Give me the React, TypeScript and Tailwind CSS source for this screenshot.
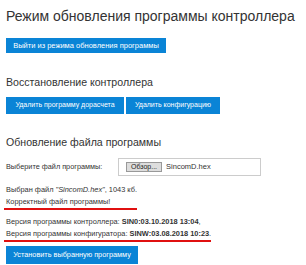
export default function App() {
  return (
    <div className="w-[306px] h-[265px] overflow-hidden bg-white pl-[6px] pt-[6px] text-[#333] font-['Liberation_Sans',Arial,sans-serif]">
      <h1 className="text-[14px] leading-[20px] whitespace-nowrap">
        Режим обновления программы контроллера
      </h1>
      <button className="block mt-[12px] h-[15px] w-[160px] bg-[#0a84d6] text-white text-[7.5px] leading-[15px] whitespace-nowrap">
        Выйти из режима обновления программы
      </button>

      <h2 className="mt-[22px] text-[10.6px] leading-[14px]">
        Восстановление контроллера
      </h2>
      <div className="mt-[8px] flex gap-[2px]">
        <button className="h-[17px] w-[118px] bg-[#0a84d6] text-white text-[7px] whitespace-nowrap">
          Удалить программу дорасчета
        </button>
        <button className="h-[17px] w-[94px] bg-[#0a84d6] text-white text-[7px] whitespace-nowrap">
          Удалить конфигурацию
        </button>
      </div>

      <h2 className="mt-[21px] text-[10.6px] leading-[14px]">
        Обновление файла программы
      </h2>
      <div className="mt-[9px] flex items-center">
        <span className="w-[112px] text-[7.3px]">Выберите файл программы:</span>
        <div className="h-[18px] w-[143px] border border-[#ccc] flex items-center pl-[7px]">
          <span className="h-[10px] px-[4px] border border-[#999] bg-[#ddd] text-[7px] leading-[8px] text-[#222]">
            Обзор...
          </span>
          <span className="ml-[4px] text-[7.5px]">SincomD.hex</span>
        </div>
      </div>

      <div className="mt-[8px] text-[7.4px] leading-[12px]">
        <p>
          Выбран файл <i>"SincomD.hex"</i>, 1043 кб.
        </p>
        <p>Корректный файл программы!</p>
        <div className="-ml-[2px] h-[2px] w-[133px] bg-[#e01010]" />
        <p className="mt-[6px]">
          Версия программы контроллера: <b>SIN0:03.10.2018 13:04</b>,
        </p>
        <p>
          Версия программы конфигуратора: <b>SINW:03.08.2018 10:23</b>.
        </p>
        <div className="-ml-[2px] h-[2px] w-[207px] bg-[#e01010]" />
      </div>
      <button className="block mt-[4px] h-[18px] w-[132px] bg-[#0a84d6] text-white text-[7.3px] whitespace-nowrap">
        Установить выбранную программу
      </button>
    </div>
  );
}
